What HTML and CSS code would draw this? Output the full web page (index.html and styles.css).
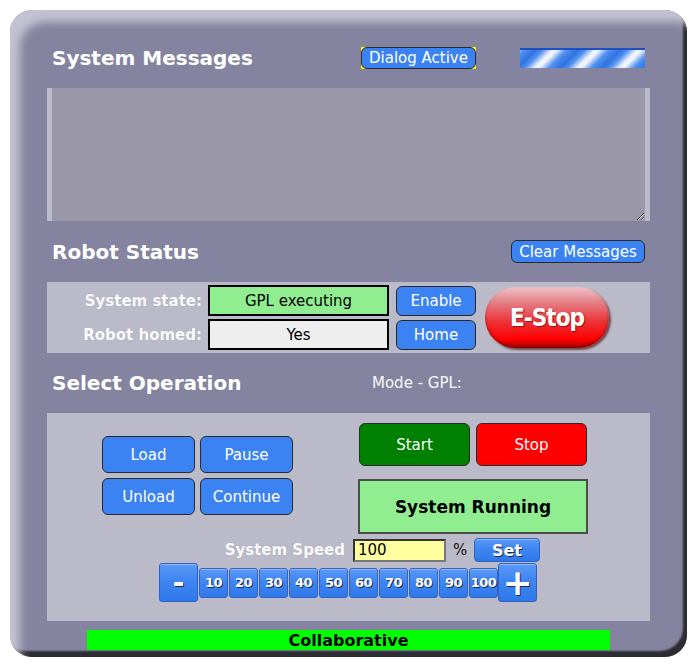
FILE: index.html
```html
<!DOCTYPE html>
<html>
<head>
<meta charset="utf-8">
<link rel="stylesheet" href="styles.css">
</head>
<body>
<div class="panel">
  <div class="header-row">
    <h2 class="title title-msg">System Messages</h2>
    <span class="dialog-wrap"><button class="btn btn-dialog">Dialog Active</button></span>
    <div class="stripes"></div>
  </div>
  <textarea class="messages"></textarea>
  <div class="status-header">
    <h2 class="title">Robot Status</h2>
    <button class="btn btn-clear">Clear Messages</button>
  </div>
  <div class="status-panel">
    <div class="label">System state:</div>
    <div class="state-box state-green">GPL executing</div>
    <button class="btn btn-side">Enable</button>
    <button class="estop">E-Stop</button>
    <div class="label">Robot homed:</div>
    <div class="state-box state-gray">Yes</div>
    <button class="btn btn-side">Home</button>
  </div>
  <div class="op-header">
    <h2 class="title title-op">Select Operation</h2>
    <span class="mode">Mode - GPL:</span>
  </div>
  <div class="op-panel">
    <div class="op-top">
      <div class="op-left">
        <button class="btn btn-op">Load</button>
        <button class="btn btn-op">Pause</button>
        <button class="btn btn-op">Unload</button>
        <button class="btn btn-op">Continue</button>
      </div>
      <div class="op-right">
        <div class="run-row">
          <button class="btn btn-start">Start</button>
          <button class="btn btn-stop">Stop</button>
        </div>
        <div class="running">System Running</div>
      </div>
    </div>
    <div class="speed-row">
      <div class="speed-label">System Speed</div>
      <div class="speed-input">100</div>
      <span class="pct">%</span>
      <button class="gloss btn-set">Set</button>
    </div>
    <div class="step-row">
      <button class="gloss big minus">-</button>
      <button class="gloss num">10</button>
      <button class="gloss num">20</button>
      <button class="gloss num">30</button>
      <button class="gloss num">40</button>
      <button class="gloss num">50</button>
      <button class="gloss num">60</button>
      <button class="gloss num">70</button>
      <button class="gloss num">80</button>
      <button class="gloss num">90</button>
      <button class="gloss num">100</button>
      <button class="gloss big plus">+</button>
    </div>
  </div>
  <div class="mode-bar">Collaborative</div>
</div>
</body>
</html>
```
FILE: styles.css
```css
* { box-sizing: border-box; }
body {
  margin: 0;
  background: #ffffff;
  font-family: "DejaVu Sans", Verdana, sans-serif;
}
button {
  font-family: inherit;
  margin: 0;
  padding: 0;
  cursor: pointer;
}
.panel {
  margin: 10px 0 0 10px;
  width: 677px;
  height: 647px;
  padding: 18px 37px 7px 37px;
  background: #8484a0;
  border-radius: 22px;
  box-shadow:
    inset 13px 15px 8px -3px #c2c2d0,
    inset -5px -7px 2px -1px #2c2c32;
  display: flex;
  flex-direction: column;
}
.title {
  margin: 0;
  padding-left: 5px;
  color: #ffffff;
  font-size: 20px;
  font-weight: bold;
}
.header-row {
  height: 60px;
  display: flex;
  align-items: center;
}
.title-msg { width: 314px; }
.dialog-wrap {
  display: inline-flex;
  background: #ffff00;
  border-radius: 1px;
}
.btn {
  background: #3b83f3;
  color: #ffffff;
  border: 1px solid #2a2a2a;
  border-radius: 5px;
  font-size: 15px;
}
.btn-dialog {
  width: 115px;
  height: 22px;
  border-radius: 6px;
}
.stripes {
  margin-left: 44px;
  width: 125px;
  height: 20px;
  border-top: 2px solid #1f4fc0;
  background: repeating-linear-gradient(-45deg, #2f73e0 0px, #5090f0 8px, #f0f3fa 15px, #f0f3fa 18px, #5090f0 25px, #2f73e0 30px);
}
.messages {
  display: block;
  width: 603px;
  height: 133px;
  margin: 0;
  padding: 0;
  border: none;
  border-left: 5px solid #bcbbc9;
  border-right: 5px solid #bcbbc9;
  background: #9a98a8;
  outline: none;
  resize: both;
}
.status-header {
  height: 61px;
  display: flex;
  align-items: center;
  justify-content: space-between;
}
.btn-clear {
  width: 134px;
  height: 23px;
  margin-right: 5px;
  border-radius: 6px;
}
.status-panel {
  height: 71px;
  background: #bbbac8;
  padding-top: 3px;
  display: grid;
  grid-template-columns: 155px 187px 87px 133px;
  grid-template-rows: 31px 31px;
  row-gap: 3px;
}
.label {
  color: #fafafa;
  font-size: 15px;
  font-weight: bold;
  text-align: right;
  align-self: center;
  white-space: nowrap;
  text-shadow: 0 0 1px #a0a0b0;
}
.state-box {
  margin-left: 6px;
  border: 2px solid #000000;
  font-size: 15px;
  display: flex;
  align-items: center;
  justify-content: center;
  color: #000000;
}
.state-green { background: #90ee90; }
.state-gray { background: #eeeeee; }
.btn-side {
  margin-left: 7px;
  height: 30px;
  align-self: center;
  border-radius: 6px;
}
.estop {
  grid-column: 4;
  grid-row: 1 / span 2;
  align-self: center;
  margin-left: 9px;
  width: 124px;
  height: 61px;
  border: none;
  border-radius: 31px;
  background: linear-gradient(180deg, #ecc4c8 0%, #e47880 28%, #ec3034 58%, #ff0000 86%, #a00000 100%);
  box-shadow: 2px 2px 2px rgba(60, 0, 0, 0.6), inset 0 -2px 3px rgba(120, 0, 0, 0.5);
  color: #ffffff;
  font-family: "DejaVu Sans Condensed", "DejaVu Sans", sans-serif;
  font-stretch: condensed;
  font-size: 24px;
  font-weight: bold;
  letter-spacing: -1px;
  text-shadow: 1px 1px 1px rgba(90, 0, 0, 0.6);
}
.op-header {
  height: 60px;
  display: flex;
  align-items: center;
}
.title-op { width: 325px; }
.mode {
  color: #f8f8f8;
  font-size: 15px;
}
.op-panel {
  height: 208px;
  background: #bbbac8;
  padding-top: 10px;
}
.op-top {
  display: flex;
  height: 111px;
}
.op-left {
  margin-left: 55px;
  margin-top: 13px;
  display: grid;
  grid-template-columns: 93px 93px;
  grid-template-rows: 37px 37px;
  gap: 5px;
  align-self: flex-start;
}
.btn-op { border-radius: 6px; }
.op-right {
  margin-left: 65px;
}
.run-row {
  display: flex;
  gap: 6px;
  margin-left: 1px;
}
.btn-start, .btn-stop {
  width: 111px;
  height: 43px;
  border-radius: 6px;
}
.btn-start { background: #008000; }
.btn-stop { background: #ff0000; }
.running {
  margin-top: 13px;
  width: 230px;
  height: 55px;
  background: #90ee90;
  border: 2px solid #4c4c4c;
  display: flex;
  align-items: center;
  justify-content: center;
  font-size: 17px;
  font-weight: bold;
  color: #000000;
}
.speed-row {
  margin-top: 4px;
  height: 24px;
  display: flex;
  align-items: center;
}
.speed-label {
  width: 298px;
  text-align: right;
  color: #fafafa;
  font-size: 15px;
  font-weight: bold;
  text-shadow: 0 0 1px #a0a0b0;
}
.speed-input {
  margin-left: 8px;
  width: 93px;
  height: 23px;
  margin-top: 1px;
  background: #ffffa0;
  border: 2px solid #333333;
  border-right-color: #777;
  border-bottom-color: #777;
  font-size: 15px;
  padding-left: 3px;
  line-height: 19px;
  color: #000;
}
.pct {
  margin-left: 7px;
  width: 14px;
  font-size: 15px;
  color: #111;
}
.gloss {
  background: linear-gradient(180deg, #5a98f6 0%, #3f86f2 45%, #2f78ea 100%);
  border: 1px solid #2e62c4;
  border-radius: 3px;
  color: #ffffff;
  font-weight: bold;
  text-shadow: 1px 1px 0 #1c2a48;
  box-shadow: inset 0 1px 0 rgba(255,255,255,0.35);
}
.btn-set {
  margin-left: 7px;
  width: 66px;
  height: 24px;
  font-size: 16px;
  border-radius: 4px;
}
.step-row {
  margin-top: 1px;
  margin-left: 112px;
  display: flex;
  align-items: center;
}
.big {
  width: 39px;
  height: 39px;
  line-height: 1;
}
.minus { font-size: 28px; }
.plus { font-size: 36px; }
.num {
  width: 29px;
  height: 30px;
  margin-left: 1px;
  font-size: 13px;
  letter-spacing: -0.6px;
}
.mode-bar {
  margin-top: 9px;
  margin-left: 40px;
  width: 523px;
  height: 20px;
  background: #00ff00;
  color: #000000;
  font-size: 16px;
  font-weight: bold;
  text-align: center;
  line-height: 21px;
}
```
